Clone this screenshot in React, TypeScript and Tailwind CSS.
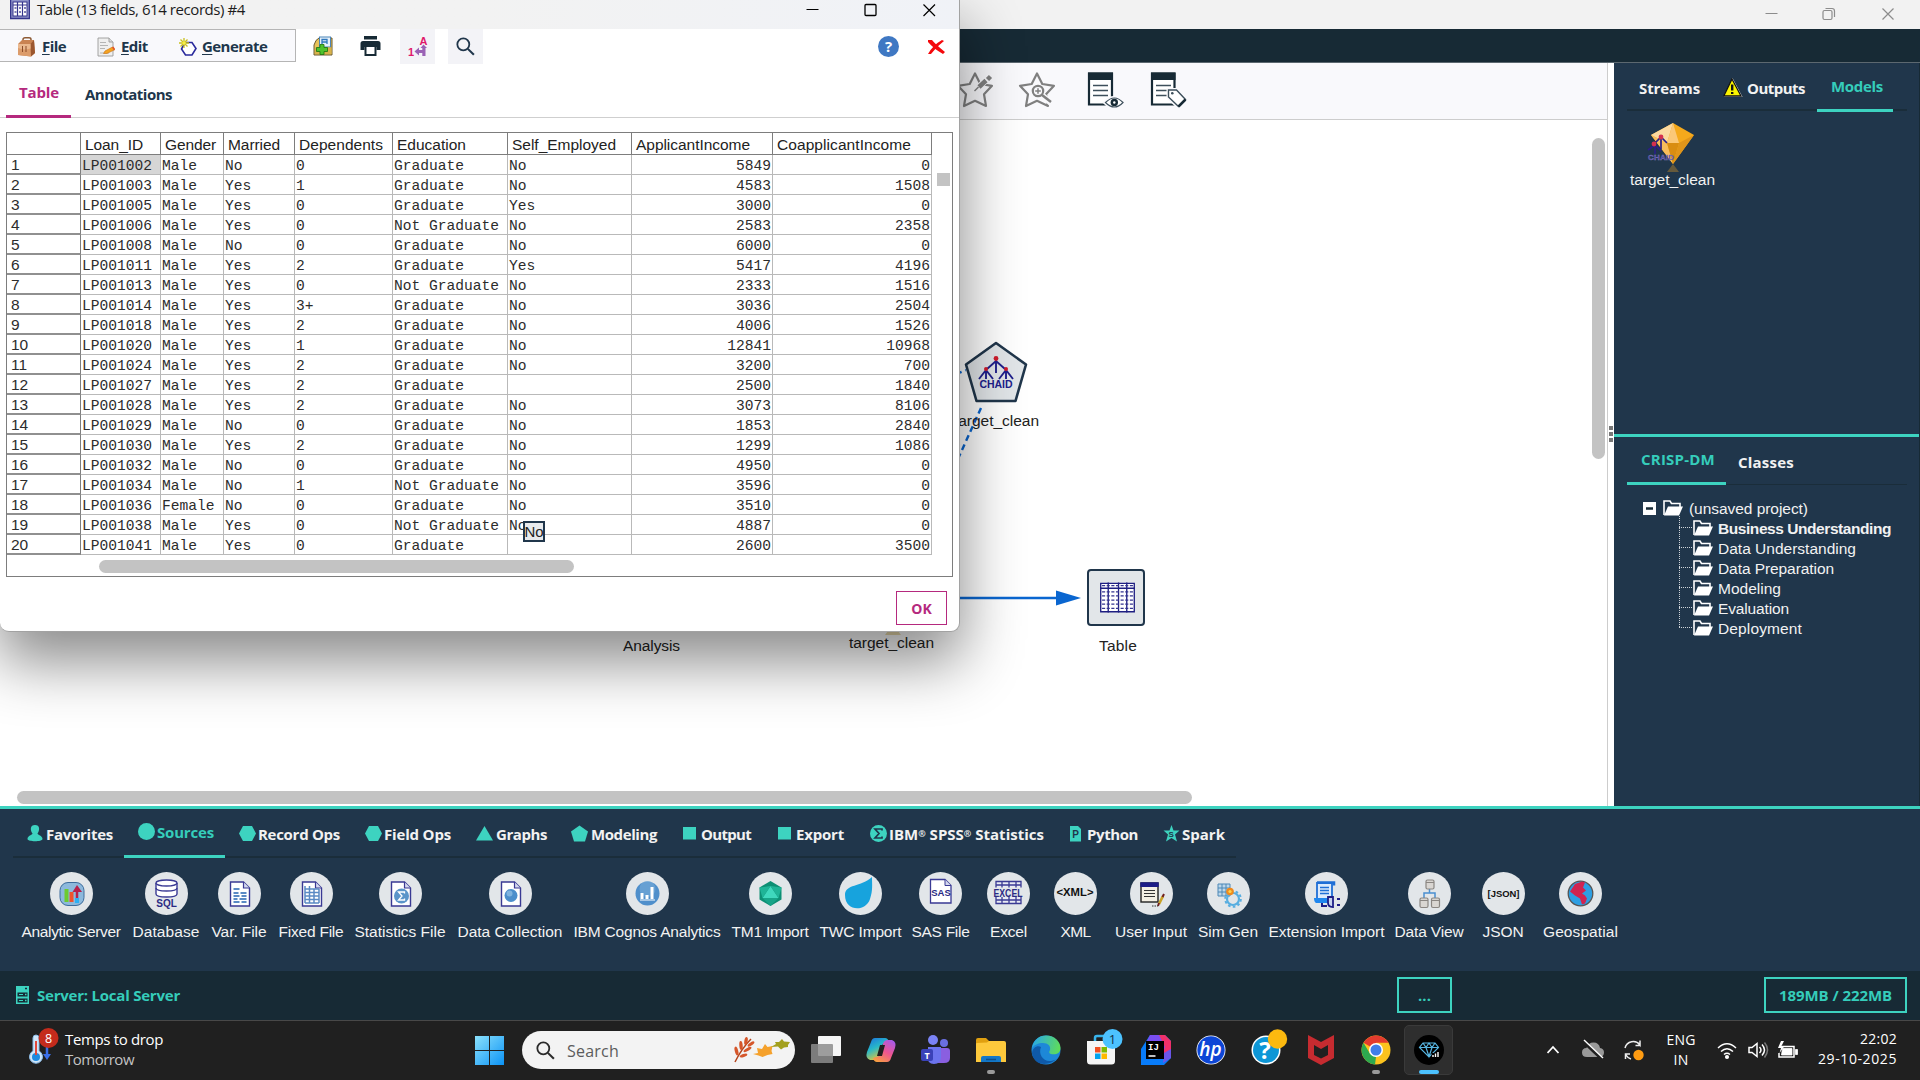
import React, { useLayoutEffect, useRef } from "react";
import type { ReactNode } from "react";

const UI = "font-['Open_Sans','Noto_Sans',sans-serif]";
const ARIAL = "font-['Liberation_Sans',Arial,sans-serif]";

/* One line of text whose tracking is adjusted so that it spans w pixels. */
function Fit({ w, className = "", children }: { w: number; className?: string; children: string }) {
  const ref = useRef<HTMLSpanElement>(null);
  useLayoutEffect(() => {
    const el = ref.current;
    if (!el) return;
    el.style.letterSpacing = "0px";
    const natural = el.getBoundingClientRect().width;
    el.style.letterSpacing = `${(w - natural) / children.length}px`;
  }, [w, children]);
  return (
    <span ref={ref} className={`inline-block whitespace-pre ${className}`}>
      {children.split(/(®)/).map((part, i) =>
        part === "®" ? (
          <span key={i} className="relative -top-[3px] text-[9px] leading-none">
            ®
          </span>
        ) : (
          part
        ),
      )}
    </span>
  );
}

/* ---------- Data ---------- */

const rows: string[][] = [
  ["LP001002", "Male", "No", "0", "Graduate", "No", "5849", "0"],
  ["LP001003", "Male", "Yes", "1", "Graduate", "No", "4583", "1508"],
  ["LP001005", "Male", "Yes", "0", "Graduate", "Yes", "3000", "0"],
  ["LP001006", "Male", "Yes", "0", "Not Graduate", "No", "2583", "2358"],
  ["LP001008", "Male", "No", "0", "Graduate", "No", "6000", "0"],
  ["LP001011", "Male", "Yes", "2", "Graduate", "Yes", "5417", "4196"],
  ["LP001013", "Male", "Yes", "0", "Not Graduate", "No", "2333", "1516"],
  ["LP001014", "Male", "Yes", "3+", "Graduate", "No", "3036", "2504"],
  ["LP001018", "Male", "Yes", "2", "Graduate", "No", "4006", "1526"],
  ["LP001020", "Male", "Yes", "1", "Graduate", "No", "12841", "10968"],
  ["LP001024", "Male", "Yes", "2", "Graduate", "No", "3200", "700"],
  ["LP001027", "Male", "Yes", "2", "Graduate", "", "2500", "1840"],
  ["LP001028", "Male", "Yes", "2", "Graduate", "No", "3073", "8106"],
  ["LP001029", "Male", "No", "0", "Graduate", "No", "1853", "2840"],
  ["LP001030", "Male", "Yes", "2", "Graduate", "No", "1299", "1086"],
  ["LP001032", "Male", "No", "0", "Graduate", "No", "4950", "0"],
  ["LP001034", "Male", "No", "1", "Not Graduate", "No", "3596", "0"],
  ["LP001036", "Female", "No", "0", "Graduate", "No", "3510", "0"],
  ["LP001038", "Male", "Yes", "0", "Not Graduate", "No", "4887", "0"],
  ["LP001041", "Male", "Yes", "0", "Graduate", "", "2600", "3500"],
];

const columns = [
  { name: "Loan_ID", cell: "w-[80px]", w: 58 },
  { name: "Gender", cell: "w-[63px]", w: 51 },
  { name: "Married", cell: "w-[71px]", w: 52 },
  { name: "Dependents", cell: "w-[98px]", w: 84 },
  { name: "Education", cell: "w-[115px]", w: 69 },
  { name: "Self_Employed", cell: "w-[124px]", w: 104 },
  { name: "ApplicantIncome", cell: "w-[141px]", w: 114 },
  { name: "CoapplicantIncome", cell: "w-[159px]", w: 134 },
];

/* ---------- Dialog icons ---------- */

const TableIcon = () => (
  <svg viewBox="0 0 20 20" className="h-5 w-5">
    <rect x="0.5" y="-2" width="19" height="20.500" fill="#8e93c8" stroke="#35358c" strokeWidth="1.500" />
    <rect x="3" y="2" width="14" height="14" fill="#fff" stroke="#35358c" />
    <path d="M3 5h14M7.500 2v14M12.500 2v14" stroke="#35358c" strokeWidth="1.200" />
    <path d="M4.500 8h2M9 8h2M14 8h2M4.500 12h2M9 12h2M14 12h2" stroke="#55559c" strokeWidth="1.300" />
  </svg>
);

const BriefcaseIcon = () => (
  <svg viewBox="0 0 19 20" className="h-5 w-[19px]">
    <path d="M6 5V2.500Q6 .8 8 .8h4Q14 .8 14 2.500V5" fill="none" stroke="#8d5a34" strokeWidth="1.5" />
    <path d="M1 7 5 3h12l1 13-4 3.500L1 18z" fill="#c98352" />
    <path d="M1 7h12.500L14 19.500 1 18z" fill="#dc9c6b" />
    <path d="M13.500 7 17 3l1 13-4 3.500z" fill="#9b5730" />
    <path d="M1 7h12.500v4.500Q7 13.500 1 11z" fill="#eab88e" />
    <path d="M5.500 9v6M9 9v6" stroke="#8b4d2a" strokeWidth="1" />
  </svg>
);

const EditDocIcon = () => (
  <svg viewBox="0 0 18 20" className="h-5 w-[18px]">
    <path d="M1 1h11l4 4v14H1z" fill="#efefef" stroke="#9a9a9a" strokeWidth=".9" />
    <path d="M12 1v4h4" fill="#ddd" stroke="#9a9a9a" strokeWidth=".9" />
    <path d="M3 5.500h6M3 8.500h8M3 11.500h5M3 16h9" stroke="#b4b4b4" />
    <path d="m6.500 16.500 1.500-2.500 7.500-4L18 12.500l-8 4z" fill="#f4a321" stroke="#c76f12" strokeWidth=".6" />
    <path d="m15 10.500 1.500-1L18 12l-1 1.500z" fill="#e4572e" />
  </svg>
);

const GenerateIcon = () => (
  <svg viewBox="0 0 18 20" className="h-5 w-[18px]">
    <path d="M6 5.500h7L17 11.500l-4 6.500H6.500L2.500 12z" fill="#fff" stroke="#2a2a9c" strokeWidth="1.600" />
    <path d="M5 1v10M0 6h10M1.500 2.500l7 7M8.500 2.500l-7 7" stroke="#c9c01d" strokeWidth="1.300" />
    <circle cx="5" cy="6" r="1.800" fill="#f6ee4a" />
  </svg>
);

const SaveAddIcon = () => (
  <svg viewBox="0 0 20 20" className="h-5 w-5">
    <path d="M1 9 3 4.500 6 2h13v17H1z" fill="#e8c35a" stroke="#6a5a30" />
    <rect x="6.500" y="1" width="11" height="10" fill="#e6f1fb" stroke="#4d86b8" />
    <path d="M9 8V3.500h5V8M9 6h5" stroke="#2f78bd" fill="none" strokeWidth="1.300" />
    <path d="M2 11.500h16.500V18H2z" fill="#d8b24a" />
    <path d="M7 8.500h4v3h3.500v4H11v3H7v-3H3.500v-4H7z" fill="#4fc22c" stroke="#257a12" strokeWidth=".9" />
  </svg>
);

const PrinterIcon = () => (
  <svg viewBox="0 0 21 20" className="h-5 w-[21px]">
    <path d="M4 0h13v3.500H4z" fill="#172a35" />
    <path d="M3 5h15q2.500 0 2.500 2.500V14h-4v-3h-12v3H.5V7.500Q.5 5 3 5z" fill="#172a35" />
    <path d="M5.500 11v8h10v-8" fill="#fff" stroke="#172a35" strokeWidth="2" />
  </svg>
);

const SortIcon = () => (
  <svg viewBox="0 0 20 21" className="h-[21px] w-5">
    <text x="11.500" y="8.500" fontSize="11" fontWeight="700" fill="#e0186b" fontFamily="Liberation Sans">A</text>
    <text x="0" y="20" fontSize="11" fontWeight="700" fill="#e0186b" fontFamily="Liberation Sans">1</text>
    <path d="m15.500 8.500-3 3.500h1.800v2H11v-2.500l-4.500 4 4.500 4v-2.500h3.300V20h3.200v-8h1.500z" fill="#9a62b5" />
  </svg>
);

const Magnifier = ({ className }: { className: string }) => (
  <svg viewBox="0 0 20 20" className={className} fill="none" stroke="currentColor">
    <circle cx="7.700" cy="7.700" r="6.300" strokeWidth="1.900" />
    <path d="m12.500 12.500 6.300 6.300" strokeWidth="2.200" />
  </svg>
);

function MenuItem({ icon, w, label, className }: { icon: ReactNode; w: string; label: string; className: string }) {
  return (
    <div className={`flex items-center ${className}`}>
      {icon}
      <span className={`${w} -mt-[1px] whitespace-nowrap text-[15px] leading-5 font-bold tracking-[-0.55px] text-[#20364b]`}>
        <span className="underline underline-offset-2">{label[0]}</span>
        {label.slice(1)}
      </span>
    </div>
  );
}

function DataGrid() {
  return (
    <div className="mt-[14px] ml-[6px] h-[445px] w-[947px] border border-[#7d7d7d] bg-white">
      <div className="flex">
        <div>
          <div className={`flex h-[22px] border-b border-[#7d7d7d] ${ARIAL} text-[15.5px] leading-[24px] text-[#222]`}>
            <div className="w-[74px] border-r border-[#7d7d7d]" />
            {columns.map((c) => (
              <div key={c.name} className={`${c.cell} shrink-0 border-r border-[#7d7d7d] pl-1`}>
                <Fit w={c.w}>{c.name}</Fit>
              </div>
            ))}
          </div>
          {rows.map((r, i) => (
            <div key={r[0]} className="flex h-5 text-[#2c2c2c]">
              <div
                className={`w-[74px] border-r border-b-2 border-r-[#7d7d7d] border-b-[#909090] pl-[4px] ${ARIAL} text-[15.5px] leading-[20px]`}
              >
                {i + 1}
              </div>
              {r.map((v, j) => (
                <div
                  key={j}
                  className={`${columns[j].cell} shrink-0 overflow-hidden border-r border-b border-[#b9b9b9] ${
                    j > 5 ? "pr-[1px] text-right" : "pl-[1px]"
                  } ${i === 0 && j === 0 ? "bg-[#d6d6d6]" : ""} font-['Liberation_Mono',monospace] text-[14.6px] leading-[23px] whitespace-pre`}
                >
                  {v}
                </div>
              ))}
            </div>
          ))}
        </div>
        <div className="ml-[5px] mt-[40px] h-[13px] w-[13px] bg-[#c3c3c3]" />
      </div>
      <div className="mt-[5px] ml-[92px] h-[13px] w-[475px] rounded-full bg-[#c3c3c3]" />
    </div>
  );
}

function Dialog() {
  return (
    <div className="absolute top-0 left-0 h-[632px] w-[960px] rounded-b-[9px] border-r border-b border-[#a2a2a2] bg-white shadow-[0_28px_60px_2px_rgba(0,0,0,0.46)]">
      <div className="flex h-[29px] items-start bg-gradient-to-r from-[#f2f2f2] via-[#f2f2f2] to-[#f0f2f7]">
        <div className="ml-[10px]">
          <TableIcon />
        </div>
        <Fit w={208} className="ml-[7px] text-[15px] leading-[19px] text-[#1c1c1c]">
          Table (13 fields, 614 records) #4
        </Fit>
        <svg viewBox="0 0 130 14" className="mt-[3px] ml-auto mr-[23px] h-[14px] w-[130px]" fill="none" stroke="#000">
          <path d="M.5 6.500h12" />
          <rect x="59" y="1.500" width="11" height="11" rx="1" strokeWidth="1.300" />
          <path d="m117.500 1.500 11.500 11.500M129 1.500 117.500 13" strokeWidth="1.200" />
        </svg>
      </div>
      <div className="flex h-[35px] items-start">
        <div className="flex h-[33px] w-[296px] items-center border-t border-r border-b border-[#b5b5b5] bg-[#f9f9fc] pt-[2px]">
          <MenuItem icon={<BriefcaseIcon />} label="File" w="ml-[6px]" className="ml-[17px] w-[80px]" />
          <MenuItem icon={<EditDocIcon />} label="Edit" w="ml-[6px]" className="w-[82px]" />
          <MenuItem icon={<GenerateIcon />} label="Generate" w="ml-[5px]" className="" />
        </div>
        <div className="ml-[17px] mt-[7px]">
          <SaveAddIcon />
        </div>
        <div className="ml-[27px] mt-[7px]">
          <PrinterIcon />
        </div>
        <div className="ml-[19px] flex h-[35px] w-[35px] items-center justify-center bg-[#f3f3f7]">
          <SortIcon />
        </div>
        <div className="ml-[13px] flex h-[35px] w-[35px] items-center justify-center bg-[#f3f3f7] text-[#20364b]">
          <Magnifier className="h-[19px] w-[19px]" />
        </div>
        <div className="ml-auto mt-[7px] flex h-[21px] w-[21px] items-center justify-center rounded-full bg-[#3f78c3] text-[15px] leading-none font-bold text-white">
          ?
        </div>
        <svg viewBox="0 0 18 16" className="mt-[10px] ml-[28px] mr-[14px] h-4 w-[18px]">
          <path d="M1 1h4q3 4 13 12l-2 2Q7 10 1 3z" fill="#f4090c" />
          <path d="M15 1l2 1Q9 8 4 15H1Q6 6 15 1z" fill="#f4090c" />
        </svg>
      </div>
      <div className="flex h-[54px] border-b border-[#cfcfcf] pl-[6px] text-[15px] font-bold">
        <div className="h-[54px] w-[65px] border-b-[3px] border-[#b5297e] pt-[17px] pl-[13px] leading-[22px] text-[#b5297e]">
          <Fit w={40}>Table</Fit>
        </div>
        <div className="pt-[19px] pl-[14px] leading-[22px] text-[#20364b]">
          <Fit w={87}>Annotations</Fit>
        </div>
      </div>
      <DataGrid />
      <div
        className={`absolute top-[521px] left-[523px] flex h-[21px] w-[22px] items-center justify-center border-2 border-[#20364b] bg-[#e8eaec] pt-[2px] ${ARIAL} text-[15px] text-[#222]`}
      >
        No
      </div>
      <div className="mt-[14px] ml-[896px] flex h-[34px] w-[51px] items-center justify-center border border-[#b5297e] bg-white text-[14px] font-bold text-[#b5297e]">
        OK
      </div>
    </div>
  );
}

/* ---------- Stream canvas ---------- */

const starPath = "M19 2.500 24.300 13 36 14.800 28 23.200 30 35 19 29.800 8 35 10 23.200 2 14.800 13.700 13z";

function StreamToolbar() {
  return (
    <div className="flex h-[57px] items-start border-b border-[#cdcdcd] bg-[#f9f9fc] pl-[956px] pt-2">
      <svg viewBox="0 0 38 38" className="h-[38px] w-[38px]" fill="none" stroke="#808080" strokeWidth="2.200" strokeLinejoin="round">
        <path d={starPath} />
        <path d="m31 8-9 9" strokeWidth="6.500" stroke="#f9f9fc" />
        <path d="m34.500 5.500-3 3M30 9.500l-7 6.500" strokeWidth="4.500" />
        <path d="m22.500 16-4 4" strokeWidth="1.500" />
      </svg>
      <svg viewBox="0 0 38 38" className="ml-[24px] h-[38px] w-[38px]" fill="none" stroke="#808080" strokeWidth="2.200" strokeLinejoin="round">
        <path d={starPath} />
        <path d="m25 25 9 8" stroke="#f9f9fc" strokeWidth="6" />
        <circle cx="20" cy="20" r="5.200" fill="#f9f9fc" />
        <path d="M17.200 20h5.600M20 17.200v5.600" strokeWidth="1.500" />
        <path d="m24 24 9 7" strokeWidth="2.500" />
      </svg>
      <svg viewBox="0 0 38 38" className="ml-[31px] h-[38px] w-[38px]">
        <path d="M2 2.500h23v31H2z" fill="#fff" stroke="#172a35" strokeWidth="2.200" />
        <path d="M1 1.500h25V9H1z" fill="#172a35" />
        <path d="M6 14.500h15M6 19.500h15M6 24.500h15" stroke="#3d4f5b" strokeWidth="1.500" />
        <path d="M17.500 31.500q9.500-10 19 0q-9.500 10-19 0z" fill="#fff" stroke="#f9f9fc" strokeWidth="3" />
        <path d="M18.500 31.500q9-9 17.500 0q-8.500 9-17.500 0z" fill="#fff" stroke="#3d4f5b" strokeWidth="1.200" />
        <circle cx="27.300" cy="31.500" r="3.700" fill="#172a35" />
        <circle cx="27.300" cy="31.500" r="1.200" fill="#fff" />
      </svg>
      <svg viewBox="0 0 38 38" className="ml-[25px] h-[38px] w-[38px]">
        <path d="M2 2.500h22.500v31H2z" fill="#fff" stroke="#172a35" strokeWidth="2.200" />
        <path d="M1 1.500h24.500V9H1z" fill="#172a35" />
        <path d="M6 14.500h15M6 19.500h13M6 24.500h12" stroke="#3d4f5b" strokeWidth="1.500" />
        <path d="M18.500 19h8l9.500 9.500-7.500 7.500-10-9.500z" fill="#fff" stroke="#f9f9fc" strokeWidth="4" />
        <path d="M18.500 19h8l9 9.500-7 7-10-9.500z" fill="#fff" stroke="#3d4f5b" strokeWidth="1.400" />
        <path d="m35.500 28.500-7 7" stroke="#172a35" strokeWidth="2.500" />
        <circle cx="22.300" cy="22.300" r="1.300" fill="#3d4f5b" />
      </svg>
    </div>
  );
}

function StreamCanvas() {
  return (
    <div className={`relative h-[686px] bg-white ${ARIAL} text-[15.5px] leading-[18px] text-[#222]`}>
      {/* Connections between the nodes */}
      <svg viewBox="0 0 260 300" className="absolute top-[240px] left-[900px] h-[300px] w-[260px]">
        <path d="m81 48-24 53M56 14l10-4" stroke="#0a66d0" strokeWidth="2.400" strokeDasharray="6 4" fill="none" />
        <path d="M40 238h118" stroke="#0a66d0" strokeWidth="2.500" />
        <path d="m156 230.500 25 7.500-25 7.500z" fill="#0a66d0" />
      </svg>
      <svg viewBox="0 0 64 62" className="absolute top-[221px] left-[964px] h-[62px] w-[64px]">
        <path d="M32 2 62 23.500 51.500 60h-39L2 23.500z" fill="#e2e6e9" stroke="#20364b" strokeWidth="2.600" strokeLinejoin="round" />
        <g stroke="#20208c" strokeWidth="1.900" fill="none">
          <path d="M32 19v13M22 29v9M42 29v9M15 38l7-9 7 9M35 38l7-9 7 9M23 28l9-8 9 8" />
        </g>
        <g fill="#d01c2c">
          <circle cx="32" cy="17.500" r="2.400" />
          <circle cx="22" cy="28" r="2" />
          <circle cx="42" cy="28" r="2" />
        </g>
        <text x="32" y="47" textAnchor="middle" fontSize="10.500" fontWeight="700" textLength="33" fill="#20208c" fontFamily="Liberation Sans">
          CHAID
        </text>
      </svg>
      <Fit w={85} className="absolute top-[292px] left-[954px]">target_clean</Fit>
      <div className="absolute top-[449px] left-[1087px] flex h-[57px] w-[58px] items-center justify-center rounded-[4px] border-2 border-[#20364b] bg-[#e2e6e9]">
        <svg viewBox="0 0 34 29" className="ml-[2px] h-[31px] w-[35px]">
          <path d="M.7.700h32.600v27.600H.7z" fill="#fff" stroke="#1f1f82" strokeWidth="1.300" />
          <path d="M0 5.500h34M8 0v29M18 0v29M26 0v29" stroke="#1f1f82" strokeWidth="1.300" />
          <path d="M2 3h30M2 9h30M2 13h30M2 17h30M2 21h30M2 25h30" stroke="#33338f" strokeWidth="1.200" strokeDasharray="3 1.500" />
        </svg>
      </div>
      <Fit w={38} className="absolute top-[517px] left-[1099px]">Table</Fit>
      <Fit w={57} className="absolute top-[517px] left-[623px]">Analysis</Fit>
      <svg viewBox="0 0 16 12" className="absolute top-[503px] left-[885px] h-3 w-4">
        <path d="m8 1 8 11H0z" fill="#eadcae" />
      </svg>
      <Fit w={85} className="absolute top-[514px] left-[849px]">target_clean</Fit>
      <div className="absolute top-[18px] left-[1592px] h-[321px] w-[13px] rounded-full bg-[#c3c3c3]" />
      <div className="absolute top-[671px] left-[17px] h-[13px] w-[1175px] rounded-full bg-[#c3c3c3]" />
    </div>
  );
}

/* ---------- Right side ---------- */

const FolderIcon = () => (
  <svg viewBox="0 0 20 16" className="h-4 w-5 shrink-0">
    <path d="M1 15V1h6l1.500 2.500H17V7" fill="none" stroke="#fff" strokeWidth="1.600" />
    <path d="M5 6.500h15L16 15.500H1z" fill="#fff" />
  </svg>
);

const phases = ["Data Understanding", "Data Preparation", "Modeling", "Evaluation", "Deployment"];
const phaseWidths = [138, 116, 63, 71, 84];

function SidePanel() {
  return (
    <div className="w-[306px] border-r border-[#172a35] bg-[#20364b] text-[15px] font-semibold text-[#f2f2f2]">
      <div className="h-[371px] pl-[13px]">
        <div className="flex h-[48px] w-[280px] border-b-2 border-[#1a2d3a] font-bold">
          <Fit w={61} className="ml-[12px] mt-[14px] leading-[22px]">Streams</Fit>
          <svg viewBox="0 0 20 20" className="ml-[23px] mt-[15px] h-5 w-5">
            <path d="M9.500 0 19.500 19H.3z" fill="#fff" />
            <path d="M9 1 18 18H.8z" fill="#fdf500" stroke="#111" strokeWidth="1.300" />
            <path d="M9.200 6.500v6M9.200 14v2" stroke="#111" strokeWidth="2.400" />
          </svg>
          <Fit w={58} className="ml-[4px] mt-[14px] leading-[22px]">Outputs</Fit>
          <div className="ml-[12px] h-[49px] w-[76px] border-b-[3px] border-[#3dd3c0] pt-[12px] pl-[14px] leading-[22px] text-[#35cdbb]">
            <Fit w={52}>Models</Fit>
          </div>
        </div>
        <div className={`mt-[10px] flex w-[94px] flex-col items-start ${ARIAL} text-[15.5px] font-normal`}>
          <svg viewBox="0 0 50 52" className="ml-[20px] h-[52px] w-[50px]">
            <path d="M4 14 26 2l21 12-21 29z" fill="#f5a91c" />
            <path d="M4 14 26 2l-6 20z" fill="#fbd9a0" />
            <path d="m26 2 6 20H20z" fill="#fbc878" />
            <path d="m4 14 16 8 6 21z" fill="#f8bd5c" />
            <path d="M20 22h12l-6 21z" fill="#d98d12" />
            <path d="m32 22 15-8-21 29z" fill="#e0951a" />
            <path d="m26 43 6 8H20z" fill="#665a3c" />
            <g stroke="#2b1f86" strokeWidth="1.700" fill="none">
              <path d="M14 16v12M8 25v8M1 29l7-5 6 6M8 22l6-6 6 6" />
            </g>
            <circle cx="14" cy="16" r="2.400" fill="#d5304f" />
            <circle cx="7" cy="23" r="2.400" fill="#d5304f" />
            <text x="1" y="39" fontSize="8" fontWeight="700" textLength="26" fill="#4a3f9e" stroke="#8f88c4" strokeWidth=".3" fontFamily="Liberation Sans">CHAID</text>
          </svg>
          <Fit w={85} className="-mt-[3px] ml-[3px] leading-[20px]">target_clean</Fit>
        </div>
      </div>
      <div className="border-t-[3px] border-[#3dd3c0] pl-[13px]">
        <div className="flex h-[48px] w-[280px] border-b border-[#1a2d3a] font-bold">
          <div className="h-[48px] w-[99px] border-b-[3px] border-[#3dd3c0] pt-[11px] pl-[14px] leading-[22px] text-[#35cdbb]">
            <Fit w={74}>CRISP-DM</Fit>
          </div>
          <Fit w={56} className="ml-[12px] mt-[14px] leading-[22px]">Classes</Fit>
        </div>
        <div className={`relative mt-[13px] ${ARIAL} text-[15.5px] font-normal`}>
          <div className="flex h-5 items-center">
            <svg viewBox="0 0 13 13" className="ml-4 h-[13px] w-[13px]">
              <path d="M0 0h13v13H0z" fill="#fff" />
              <path d="M3 6.500h7" stroke="#172a35" strokeWidth="2.500" />
            </svg>
            <span className="ml-[7px]"><FolderIcon /></span>
            <Fit w={119} className="mt-[2px] ml-[6px]">(unsaved project)</Fit>
          </div>
          <svg viewBox="0 0 16 114" className="absolute top-[18px] left-[52px] h-[114px] w-4" fill="none" stroke="#cfd5da" strokeDasharray="1 1">
            <path d="M.5 0v112M0 11.500h15M0 31.500h15M0 51.500h15M0 71.500h15M0 91.500h15M0 111.500h15" />
          </svg>
          <div className="flex h-5 items-center pl-[66px] font-bold">
            <FolderIcon />
            <Fit w={173} className="mt-[1px] ml-[5px]">Business Understanding</Fit>
          </div>
          {phases.map((p, i) => (
            <div key={p} className="flex h-5 items-center pl-[66px]">
              <FolderIcon />
              <Fit w={phaseWidths[i]} className="mt-[1px] ml-[5px]">{p}</Fit>
            </div>
          ))}
        </div>
      </div>
    </div>
  );
}

/* ---------- Palette ---------- */

const teal = "#3dd3c0";

const tabs: { label: string; cell: string; gap: string; w: number; active?: boolean; icon: ReactNode }[] = [
  {
    label: "Favorites", cell: "w-[111px] pl-[14px]", gap: "ml-[2px]", w: 67,
    icon: <path d="M8 0c5 0 5 5 2.500 8.500 0 1.500 5 2 5 5.500 0 3-15 3-15 0 0-3.500 5-4 5-5.500C3 5 3 0 8 0z" fill={teal} />,
  },
  { label: "Sources", cell: "w-[101px] pl-[14px]", gap: "ml-[2px]", w: 57, active: true, icon: <circle cx="8.500" cy="8.500" r="8.500" fill={teal} /> },
  { label: "Record Ops", cell: "w-[126px] pl-[14px]", gap: "ml-[2px]", w: 82, icon: <path d="M4 1h9l4 7.500L13 16H4L0 8.500z" fill={teal} /> },
  { label: "Field Ops", cell: "w-[112px] pl-[14px]", gap: "ml-[2px]", w: 67, icon: <path d="M4 1h9l4 7.500L13 16H4L0 8.500z" fill={teal} /> },
  { label: "Graphs", cell: "w-[95px] pl-[13px]", gap: "ml-[3px]", w: 51, icon: <path d="M8.500 1 17 15.500H0z" fill={teal} /> },
  { label: "Modeling", cell: "w-[110px] pl-[13px]", gap: "ml-[3px]", w: 66, icon: <path d="m8.500.5 8.500 6L14 16.500H3L0 6.500z" fill={teal} /> },
  { label: "Output", cell: "w-[97px] pl-[15px]", gap: "ml-[1px]", w: 50, icon: <path d="M0 2h13v12.500H0z" fill={teal} /> },
  { label: "Export", cell: "w-[93px] pl-[13px]", gap: "ml-[1px]", w: 48, icon: <path d="M0 2h13v12.500H0z" fill={teal} /> },
  {
    label: "IBM® SPSS® Statistics", cell: "w-[200px] pl-[12px]", gap: "ml-[2px]", w: 155,
    icon: (
      <>
        <circle cx="8.500" cy="8.500" r="8.500" fill={teal} />
        <path d="M12 5.500V4H5l4 4.500L5 13h7v-1.500" stroke="#20364b" strokeWidth="1.700" fill="none" />
      </>
    ),
  },
  {
    label: "Python", cell: "w-[95px] pl-[12px]", gap: "ml-0", w: 51,
    icon: (
      <>
        <path d="M0 1h8l3 3v12.500H0z" fill={teal} />
        <text x="2.200" y="13" fontSize="10" fontWeight="700" fill="#20364b" fontFamily="Liberation Sans">P</text>
      </>
    ),
  },
  {
    label: "Spark", cell: "w-[77px] pl-[10px]", gap: "ml-[2px]", w: 43,
    icon: (
      <>
        <path d="m8.500 0 2 5.500h6L12 9.500l2 7-5.500-3.500L3 16.500l2-7L.5 5.500h6z" fill={teal} />
        <text x="5.500" y="12" fontSize="8" fontWeight="700" fill="#20364b" fontFamily="Liberation Sans">S</text>
      </>
    ),
  },
];

const sheet = (
  <path d="M0 0h13l6 6v18H0z" fill="#fff" stroke="#3a3a94" strokeWidth="1.400" />
);
const fold = <path d="M13 0v6h6" fill="#d4d8ee" stroke="#3a3a94" strokeWidth="1.200" />;

const gears = (
  <g>
    <circle cx="26" cy="27" r="6" fill="none" stroke="#58aee0" strokeWidth="2.200" />
    <circle cx="26" cy="27" r="7.800" fill="none" stroke="#58aee0" strokeWidth="2" strokeDasharray="2.600 2.300" />
  </g>
);

const nodes: { label: string; cell: string; w: number; art: ReactNode }[] = [
  {
    label: "Analytic Server", cell: "w-[110px]", w: 99,
    art: (
      <g>
        <rect x="10" y="10.500" width="24" height="23" rx="8" fill="#8db9dc" stroke="#3c6c9c" />
        <path d="M16.500 17v13" stroke="#6ccb2f" strokeWidth="4" />
        <path d="M21.500 20v10" stroke="#f0522c" strokeWidth="4" />
        <path d="M27 26V18" stroke="#b81f4a" strokeWidth="2.500" />
        <path d="m22.500 20 4.500-7 5 7z" fill="#b81f4a" />
        <path d="M27 26v5" stroke="#2db0f2" strokeWidth="4" />
      </g>
    ),
  },
  {
    label: "Database", cell: "w-[80px]", w: 67,
    art: (
      <g>
        <path d="M11 11v11c0 4 21 4 21 0V11" fill="#fff" stroke="#3a3a94" strokeWidth="1.400" />
        <ellipse cx="21.500" cy="11" rx="10.500" ry="3" fill="#fff" stroke="#3a3a94" strokeWidth="1.400" />
        <path d="M11 16c0 4 21 4 21 0" fill="none" stroke="#3a3a94" strokeWidth="1.400" />
        <text x="21.500" y="35" textAnchor="middle" fontSize="10" fontWeight="700" fill="#2a2a84" fontFamily="Liberation Sans">SQL</text>
      </g>
    ),
  },
  {
    label: "Var. File", cell: "w-[66px]", w: 55,
    art: (
      <g transform="translate(12.500 10)">
        {sheet}{fold}
        <path d="M3 7h6M3 11h5M10 11h6M3 14h6M11 14h5M3 17h4M9 17h7M3 20h6M11 20h5" stroke="#5a8ac4" strokeWidth="1.900" />
      </g>
    ),
  },
  {
    label: "Fixed File", cell: "w-[78px]", w: 65,
    art: (
      <g transform="translate(12.500 10)">
        {sheet}{fold}
        <path d="M2.500 7h14M2.500 10.500h14M2.500 14h14M2.500 17.500h14M2.500 21h14M2.500 4v17M7 4v17M11.500 7v14M16.500 7v14" stroke="#5a8ac4" strokeWidth="1.500" />
      </g>
    ),
  },
  {
    label: "Statistics File", cell: "w-[100px]", w: 91,
    art: (
      <g transform="translate(12.500 10)">
        {sheet}{fold}
        <circle cx="10" cy="14" r="7.500" fill="#5b95c9" />
        <path d="M13 11.500V10H7l3.500 4L7 18h6v-1.500" fill="none" stroke="#fff" strokeWidth="1.300" />
      </g>
    ),
  },
  {
    label: "Data Collection", cell: "w-[120px]", w: 105,
    art: (
      <g transform="translate(12.500 10)">
        {sheet}{fold}
        <circle cx="9.500" cy="13.500" r="6.500" fill="#4c8fcb" />
        <circle cx="8" cy="11.500" r="3" fill="#7fb3de" />
      </g>
    ),
  },
  {
    label: "IBM Cognos Analytics", cell: "w-[154px]", w: 147,
    art: (
      <g>
        <circle cx="21.500" cy="21.500" r="12" fill="#4f8fcb" />
        <circle cx="21.500" cy="17" r="8" fill="#78acd9" opacity=".6" />
        <path d="M16 27v-6M21 27v-4M26 27V15" stroke="#fff" strokeWidth="3" />
        <path d="M14 28h15" stroke="#fff" />
      </g>
    ),
  },
  {
    label: "TM1 Import", cell: "w-[92px]", w: 77,
    art: (
      <g>
        <path d="m21.500 9 11 6.500v12L21.500 34l-11-6.500v-12z" fill="#0d8f74" />
        <path d="m21.500 14 8 12h-16z" fill="#3fd8bd" />
        <path d="m10.500 15.500 11-1.500-8 12zM32.500 15.500l-11-1.500 8 12z" fill="#1fb497" />
        <path d="M13.500 26h16l-8 8z" fill="#17a488" />
      </g>
    ),
  },
  {
    label: "TWC Import", cell: "w-[89px]", w: 82,
    art: <path d="M33 5c0 8 1 13-2 22-4 13-25 13-25-4C6 12 22 15 33 5z" fill="#17a3dd" />,
  },
  {
    label: "SAS File", cell: "w-[71px]", w: 58,
    art: (
      <g>
        <path d="M11.500 7.500H26l6 6V31H11.500z" fill="#fff" stroke="#3a3a94" strokeWidth="1.300" />
        <path d="M26 7.500v6h6" fill="#d4d8ee" stroke="#3a3a94" />
        <text x="22" y="24" textAnchor="middle" fontSize="9.500" fontWeight="700" fill="#2a2a84" fontFamily="Liberation Sans">SAS</text>
      </g>
    ),
  },
  {
    label: "Excel", cell: "w-[65px]", w: 37,
    art: (
      <g>
        <path d="M9 9.500h25v22H9zM9 13h25M9 28h25M15 9v22M22 9v22M29 9v22" fill="#e9ebf4" stroke="#3a3a94" strokeWidth="1.300" />
        <path d="M6 15.500h30v9.500H6z" fill="#e2e6e9" />
        <text x="21" y="24.500" textAnchor="middle" fontSize="11" fontWeight="700" textLength="29" lengthAdjust="spacingAndGlyphs" fill="#2a2a84" fontFamily="Liberation Sans">EXCEL</text>
      </g>
    ),
  },
  {
    label: "XML", cell: "w-[69px]", w: 30,
    art: <text x="21" y="24" textAnchor="middle" fontSize="11.500" fontWeight="700" textLength="37" lengthAdjust="spacingAndGlyphs" fill="#111" fontFamily="Liberation Sans">&lt;XML&gt;</text>,
  },
  {
    label: "User Input", cell: "w-[82px]", w: 72,
    art: (
      <g>
        <rect x="11" y="11" width="17" height="19" fill="#f3efe4" stroke="#222" strokeWidth="1.400" />
        <path d="M10.300 10.300h18.400V15H10.300z" fill="#1d1d86" />
        <path d="M14 18.500h11M14 21.500h11M14 24.500h11" stroke="#333" strokeWidth="1.200" />
        <path d="m33 24-4 8" stroke="#c9a227" strokeWidth="2.600" />
        <path d="m34 22-1.500 3M29 31l-1 3" stroke="#702020" strokeWidth="2" />
        <path d="M22 34h6" stroke="#333" strokeDasharray="1.500 1" />
      </g>
    ),
  },
  {
    label: "Sim Gen", cell: "w-[72px]", w: 60,
    art: (
      <g>
        <path d="M11 12h12v12H11z" fill="#bcd7ea" stroke="#4c88b6" />
        <path d="M11 16h12M11 20h12M15 12v12M19 12v12" stroke="#4c88b6" />
        {gears}
        <circle cx="23" cy="19.500" r="3.800" fill="#f08a1c" />
        <circle cx="23" cy="19.500" r="1.600" fill="#ffd34a" />
      </g>
    ),
  },
  {
    label: "Extension Import", cell: "w-[125px]", w: 116,
    art: (
      <g>
        <path d="M12 11h15v17H12z" fill="#dbeafc" stroke="#1f6fd6" strokeWidth="1.800" />
        <path d="M12 10.500h17v3" stroke="#1f6fd6" strokeWidth="2.500" fill="none" />
        <path d="M15 15.500h9M15 18.500h9M15 21.500h9" stroke="#1f6fd6" strokeWidth="1.300" />
        <path d="M9 26h15v5H11q-2-1-2-5z" fill="#1f86ee" />
        <path d="M23 25h5v10q-5 0-5-4z" fill="#c8d4ee" stroke="#1d1d86" strokeWidth="1.800" />
        <path d="M17 31v3h5M32 27h3M32 33h3" stroke="#1d1d86" strokeWidth="2" fill="none" />
      </g>
    ),
  },
  {
    label: "Data View", cell: "w-[80px]", w: 69,
    art: (
      <g fill="#d9d6d2" stroke="#8a8682" strokeWidth="1.200">
        <path d="M21.500 17v4M16 26v-5h11v5" fill="none" stroke="#4a8fd0" strokeWidth="1.500" />
        <rect x="18" y="8" width="8" height="9" rx="1.500" />
        <rect x="12" y="26" width="8" height="9.500" rx="1.500" />
        <rect x="23.500" y="26" width="8" height="9.500" rx="1.500" />
        <path d="M18 10.500h8M12 28.500h8M23.500 28.500h8" />
      </g>
    ),
  },
  {
    label: "JSON", cell: "w-[68px]", w: 41,
    art: <text x="21.500" y="25" textAnchor="middle" fontSize="9.500" fontWeight="700" textLength="32" lengthAdjust="spacingAndGlyphs" fill="#111" fontFamily="Liberation Sans">[JSON]</text>,
  },
  {
    label: "Geospatial", cell: "w-[87px]", w: 75,
    art: (
      <g>
        <circle cx="21.500" cy="21.500" r="12.300" fill="#2d9fe3" stroke="#555" strokeWidth="1.300" />
        <path d="m16 12 7-2.500 3 1-2 5 3 3-4 3 3 2 2 3-2 5-3 1-2-6-5-3-5-4z" fill="#d02450" />
      </g>
    ),
  },
];

function Palette() {
  return (
    <div className="h-[165px] border-t-[3px] border-[#3dd3c0] bg-[#20364b]">
      <div className="ml-[13px] flex h-[49px] w-[1223px] border-b-2 border-[#1a2d3a] text-[15px] leading-[20px] font-bold">
        {tabs.map((t) => (
          <div
            key={t.label}
            className={`flex h-[49px] shrink-0 items-start ${t.cell} ${
              t.active ? "border-b-[3px] border-[#3dd3c0] pt-[14px] text-[#35cdbb]" : "pt-[16px] text-[#f2f2f2]"
            }`}
          >
            <svg viewBox="0 0 17 17" className="h-[17px] w-[17px] shrink-0">{t.icon}</svg>
            <Fit w={t.w} className={`-mt-px ${t.gap}`}>{t.label}</Fit>
          </div>
        ))}
      </div>
      <div className={`flex pl-4 pt-[14px] ${ARIAL} text-[15.5px] text-[#f2f2f2]`}>
        {nodes.map((n) => (
          <div key={n.label} className={`${n.cell} flex shrink-0 flex-col items-center`}>
            <svg viewBox="0 0 43 43" className="h-[43px] w-[43px]">
              <circle cx="21.500" cy="21.500" r="21.500" fill="#e2e6e9" />
              {n.art}
            </svg>
            <Fit w={n.w} className="mt-[7px] leading-[20px]">{n.label}</Fit>
          </div>
        ))}
      </div>
    </div>
  );
}

function StatusBar() {
  return (
    <div className="flex h-[48px] items-center bg-[#172a35] text-[15px] font-bold text-[#35cdbb]">
      <svg viewBox="0 0 13 18" className="ml-4 h-[18px] w-[13px]">
        <path d="M0 0h13v18H0z" fill="#3dd3c0" />
        <path d="M1.500 6.500h10v4h-10zM1.500 12.500h10v4h-10z" fill="#172a35" />
        <path d="M3 8.500h4M3 14.500h4" stroke="#3dd3c0" />
        <path d="M9 2.500h2" stroke="#172a35" strokeWidth="1.500" />
        <path d="M9 8.500h1.500M9 14.500h1.500" stroke="#3dd3c0" strokeWidth="1.500" />
      </svg>
      <Fit w={143} className="ml-2">Server: Local Server</Fit>
      <div className="ml-auto flex h-9 w-[55px] items-center justify-center border-2 border-[#3dd3c0]">...</div>
      <div className="mr-[13px] ml-[312px] flex h-9 w-[143px] items-center justify-center border-2 border-[#3dd3c0]">
        <Fit w={113}>189MB / 222MB</Fit>
      </div>
    </div>
  );
}

/* ---------- Taskbar ---------- */

const apps: { id: string; art: ReactNode; dot?: boolean }[] = [
  {
    id: "task-view",
    art: (
      <g>
        <rect x="7" y="1" width="23" height="20" rx="1" fill="#f5f5f5" />
        <rect x="0" y="9" width="22" height="19" rx="1" fill="#8d8d8d" fillOpacity=".85" />
      </g>
    ),
  },
  {
    id: "copilot",
    art: (
      <g>
        <path d="M9 3h10q3 0 4 4l-3 1q-4 0-5 5l-2 8q-1 4-5 4H4q-5-2-3-8L5 7q1-4 4-4z" fill="url(#cp1)" />
        <path d="M21 27H11q-3 0-4-4l3-1q4 0 5-5l2-8q1-4 5-4h4q5 2 3 8l-4 10q-1 4-4 4z" fill="url(#cp2)" />
        <path d="m14 10-3 11h5l3-11z" fill="#202020" />
      </g>
    ),
  },
  {
    id: "teams",
    art: (
      <g>
        <circle cx="12" cy="5" r="5" fill="#7b83f5" />
        <circle cx="23" cy="8" r="4" fill="#6a6fe0" />
        <path d="M17 13h9q3 0 3 3v7q0 5-6 5h-6z" fill="#8a5fe0" />
        <path d="M7 12h13v10q0 7-7 7t-6-7z" fill="#6c74ee" />
        <rect x="0" y="14" width="12" height="12" rx="2" fill="#3a42b8" />
        <text x="6" y="23.500" textAnchor="middle" fontSize="9" fontWeight="700" fill="#fff" fontFamily="Open Sans">T</text>
      </g>
    ),
  },
  {
    id: "explorer", dot: true,
    art: (
      <g>
        <path d="M0 5q0-2 2-2h8l3 3v5H0z" fill="#e0a010" />
        <path d="M0 9q0-1 1-1l10-.5L13 6h15q2 0 2 2v19H0z" fill="#fdc93c" />
        <path d="M5 27v-4q0-2 2-2h16q2 0 2 2v4z" fill="#1378c8" />
        <path d="M10 24.500h10" stroke="#0b4f8c" strokeWidth="1.500" />
      </g>
    ),
  },
  {
    id: "edge",
    art: (
      <g>
        <circle cx="15" cy="15" r="14.500" fill="#1d88d8" />
        <path d="M1 13C3 3 10 .5 15 .5c9 0 14.500 6.500 14.500 12.500S24 20 20 19q-3-1-1-4c1-4-2-7-7-7S3 10 1 13z" fill="url(#eg)" />
        <path d="M10 12c-3 7 2 15 10 14 3-.5 5-1.500 6-2.500C19 31 4 32 1 19c0-7 6-9 9-7z" fill="#0f59a8" />
      </g>
    ),
  },
  {
    id: "store",
    art: (
      <g>
        <path d="M9 7V3q0-2 2-2h8q2 0 2 2v4" fill="none" stroke="#38b4ec" strokeWidth="2.500" />
        <path d="M1 6h28v20q0 3.500-3.500 3.500h-21Q1 29.500 1 26z" fill="#f5f5f5" />
        <path d="M9 12h5.500v5.500H9z" fill="#f25022" /><path d="M15.500 12H21v5.500h-5.500z" fill="#7fba00" />
        <path d="M9 18.500h5.500V24H9z" fill="#00a4ef" /><path d="M15.500 18.500H21V24h-5.500z" fill="#ffb900" />
        <circle cx="26.500" cy="4" r="10" fill="#4cc2ff" />
        <text x="26.500" y="9" textAnchor="middle" fontSize="13" fill="#12324a" fontFamily="Open Sans">1</text>
      </g>
    ),
  },
  {
    id: "intellij",
    art: (
      <g>
        <path d="M9 0h15l6 6v17l-7 7H0V14z" fill="#087cfa" />
        <path d="M16 0h8l6 6v12l-8 2z" fill="#f0306a" />
        <path d="M9 0h9l6 12-4 12H5V8z" fill="#7a4ef0" />
        <path d="m22 28 8-5V14l-7 4z" fill="#6b55e8" />
        <rect x="5" y="6" width="18" height="18" fill="#000" />
        <text x="7" y="15" fontSize="9" fontWeight="700" fill="#fff" fontFamily="Liberation Mono">IJ</text>
        <path d="M7.500 21h7" stroke="#fff" strokeWidth="1.500" />
      </g>
    ),
  },
  {
    id: "hp",
    art: (
      <g>
        <circle cx="15" cy="15" r="14.500" fill="#fff" />
        <circle cx="15" cy="15" r="13.700" fill="#0d46d6" />
        <text x="14.500" y="20.500" textAnchor="middle" fontSize="19" fontStyle="italic" fontWeight="600" fill="#fff" fontFamily="Open Sans">hp</text>
      </g>
    ),
  },
  {
    id: "support",
    art: (
      <g>
        <circle cx="15" cy="15" r="14.500" fill="#fff" />
        <circle cx="15" cy="15" r="13" fill="#0d96d6" />
        <text x="14" y="24" textAnchor="middle" fontSize="24" fontWeight="700" fill="#fff" fontFamily="Open Sans">?</text>
        <circle cx="26.500" cy="4" r="9.700" fill="#fcb90f" />
      </g>
    ),
  },
  {
    id: "mcafee",
    art: <path d="m2 0 13 7 13-7v23l-13 7-13-7zm6 10v10l7 3.500 7-3.500V10l-7 4z" fill="#c62b30" fillRule="evenodd" />,
  },
  {
    id: "chrome", dot: true,
    art: (
      <g>
        <circle cx="15" cy="15" r="14.500" fill="#fcc31e" />
        <path d="M15 15 2.500 7.700A14.500 14.500 0 0 1 27.600 7.800H15z" fill="#e33b2e" />
        <path d="M2.500 7.700 9 18.800 15 22l-1 7.500A14.500 14.500 0 0 1 2.500 7.700z" fill="#2da94f" />
        <circle cx="15" cy="15" r="7" fill="#fff" />
        <circle cx="15" cy="15" r="5.500" fill="#3f7ee8" />
      </g>
    ),
  },
];

function Taskbar() {
  return (
    <div className="flex h-[61px] border-t border-[#172a35] bg-[#202020] text-white shadow-[inset_0_1px_0_#484848]">
      <svg viewBox="0 0 36 40" className="mt-[7px] ml-[26px] h-10 w-9">
        <path d="M7 11q0-3 3-3t3 3v13a6.500 6.500 0 1 1-6 0z" fill="#cfe6fa" stroke="#8cbce8" />
        <circle cx="10" cy="30" r="4" fill="#1e8ae0" />
        <path d="M10 14v14" stroke="#e0483c" strokeWidth="2" />
        <path d="M21 20v8" stroke="#3a6fe8" strokeWidth="2.500" />
        <path d="m17 27 4 6 4-6z" fill="#3a6fe8" />
        <circle cx="22.500" cy="11" r="10" fill="#c42b1c" />
        <text x="22.500" y="15.500" textAnchor="middle" fontSize="12.500" fill="#fff" fontFamily="Open Sans">8</text>
      </svg>
      <div className="mt-[9px] ml-[3px] flex w-[410px] flex-col items-start text-[15px] leading-5">
        <Fit w={98}>Temps to drop</Fit>
        <Fit w={69} className="text-[#c4c4c4]">Tomorrow</Fit>
      </div>
      <svg viewBox="0 0 29 29" className="mt-4 h-[29px] w-[29px]">
        <defs>
          <linearGradient id="win" x1="0" y1="0" x2="1" y2="1"><stop stopColor="#8be1fc" /><stop offset="1" stopColor="#0c93f5" /></linearGradient>
          <linearGradient id="cp1" x1="0" y1="0" x2=".5" y2="1"><stop stopColor="#1c6fe0" /><stop offset=".5" stopColor="#27b8c8" /><stop offset="1" stopColor="#e8c838" /></linearGradient>
          <linearGradient id="cp2" x1=".8" y1="0" x2=".2" y2="1"><stop stopColor="#a85ae8" /><stop offset=".5" stopColor="#ee5590" /><stop offset="1" stopColor="#f8a040" /></linearGradient>
          <linearGradient id="eg" x1="0" y1=".3" x2="1" y2=".5"><stop stopColor="#28a8e8" /><stop offset="1" stopColor="#5fdc5a" /></linearGradient>
        </defs>
        <path d="M0 0h14v14H0zM15 0h14v14H15zM0 15h14v14H0zM15 15h14v14H15z" fill="url(#win)" />
      </svg>
      <div className="mt-[11px] ml-[18px] flex h-[38px] w-[273px] items-center rounded-full bg-[#f3f3f3] pl-[14px] text-[#2b2b2b]">
        <Magnifier className="h-[19px] w-[19px]" />
        <Fit w={52} className="mt-px ml-[12px] text-[16px] text-[#5c5c5c]">Search</Fit>
        <svg viewBox="0 0 58 28" className="ml-auto mr-[4px] h-7 w-[58px]">
          <path d="M2 26Q9 12 18 3" stroke="#b4441c" strokeWidth="1.500" fill="none" />
          <g fill="#d5562a">
            <ellipse cx="13" cy="5" rx="1.700" ry="4" transform="rotate(10 13 5)" />
            <ellipse cx="18" cy="8" rx="4" ry="1.500" transform="rotate(-35 18 8)" />
            <ellipse cx="8" cy="9.500" rx="1.700" ry="4.500" transform="rotate(-5 8 9.500)" />
            <ellipse cx="14.500" cy="13.500" rx="4.500" ry="1.500" transform="rotate(-30 14.500 13.500)" />
            <ellipse cx="3.500" cy="15" rx="1.700" ry="4.500" transform="rotate(-15 3.500 15)" />
            <ellipse cx="10.500" cy="19.500" rx="4" ry="1.500" transform="rotate(-20 10.500 19.500)" />
          </g>
          <path d="m20 18 5-1-1-5 5 1 3-5 2.500 3 5-1-1 5 1 3-5 1-5 2-4-1.500z" fill="#f5a12c" />
          <path d="m38 11 5-3-1-2 4 0 3-3 2 2.500 6 .5-2 3 0 2-4 .5-3 2-3-3z" fill="#a3a01e" />
        </svg>
      </div>
      <div className="ml-[3px] flex">
        {apps.map((a) => (
          <div key={a.id} className="flex w-[55px] flex-col items-center">
            <svg viewBox="0 0 30 30" className="mt-[15px] h-[30px] w-[30px] overflow-visible">{a.art}</svg>
            {a.dot && <div className="mt-[5px] h-1 w-2 rounded-full bg-[#9a9a9a]" />}
          </div>
        ))}
        <div className="mt-[5px] ml-px flex h-[50px] w-[49px] flex-col items-center rounded-[5px] border border-[#3a3a3a] bg-[#2e2e2e]">
          <svg viewBox="0 0 30 30" className="mt-[9px] ml-px h-[30px] w-[30px]">
            <circle cx="15" cy="15" r="15" fill="#000" />
            <path d="M9 8h12l3.500 4.500L15 22 5.500 12.500zM5.500 12.500h19M9 8l3 4.500 3 9 3-9L21 8M12 12.500 15 8l3 4.500" fill="none" stroke="#56b4e0" strokeWidth="1.200" />
            <path d="M17.500 18h8v5h-8z" fill="#000" />
            <path d="M19 22v-2M21.500 22v-3.500M24 22v-5" stroke="#fff" strokeWidth="1.400" />
          </svg>
          <div className="mt-[5px] h-1 w-5 rounded-full bg-[#4cc2ff]" />
        </div>
      </div>
      <svg viewBox="0 0 100 24" className="mt-[18px] ml-auto h-6 w-[100px]">
        <path d="m.5 15 5.500-6 5.500 6" stroke="#fff" strokeWidth="1.800" fill="none" />
        <path d="M40 19q-5 0-5-4.500T39.500 10Q41 4.500 46.500 4.500T53 10q4 .5 4 4.500T52.500 19z" fill="#9a9a9a" />
        <path d="m36 3 19 18" stroke="#202020" strokeWidth="3.500" />
        <path d="m37 2 19 18" stroke="#fff" strokeWidth="1.400" />
        <path d="M78 10a8.500 8.500 0 0 1 15-3V2.500M93 7.500h-4.500M78.500 21v-5H83M79 17a8.500 8.500 0 0 0 5 4" stroke="#eee" strokeWidth="1.500" fill="none" />
        <circle cx="91.500" cy="17" r="5.200" fill="#ff9c12" />
      </svg>
      <div className="mt-[10px] ml-[16px] flex w-[36px] flex-col items-center text-[14px] leading-5">
        <Fit w={29}>ENG</Fit>
        <Fit w={15}>IN</Fit>
      </div>
      <svg viewBox="0 0 84 24" className="mt-[18px] ml-[17px] h-6 w-[84px]" fill="none" stroke="#fff" strokeWidth="1.500">
        <path d="M2 10q9-8.500 18 0M5 13.500q6-5.500 12 0M8 16.500q3-2.500 6 0" />
        <circle cx="11" cy="19" r="1.300" fill="#fff" />
        <path d="M33 9.500h3l5-4v13l-5-4h-3z" />
        <path d="M43.500 9q3 3 0 6M46 6.500q5 5.500 0 11" />
        <path d="M48.500 4.500q6 7 0 15" stroke="#777" />
        <path d="M66 8.500h12v10.500H63V15" />
        <path d="M66.500 10.500H76v6.500H65.500zM79.500 11.500h2v5h-2z" fill="#fff" strokeWidth=".8" />
        <path d="m65 3-3 7h3l-1.500 5 5-7h-3L68 3z" fill="#fff" stroke="none" />
      </svg>
      <div className="mr-[23px] ml-[16px] mt-[9px] flex w-[81px] flex-col items-end text-[14px] leading-5">
        <Fit w={37}>22:02</Fit>
        <Fit w={79}>29-10-2025</Fit>
      </div>
    </div>
  );
}

export default function App() {
  return (
    <div className={`relative flex h-[1080px] w-[1920px] flex-col overflow-hidden bg-white ${UI}`}>
      <div className="flex h-[29px] justify-end bg-[#f2f2f2]">
        <svg viewBox="0 0 132 14" className="mt-[7px] mr-[26px] h-[14px] w-[132px]" fill="none" stroke="#8c8c8c">
          <path d="M3.500 6.500h12" />
          <rect x="61" y="3.500" width="9" height="9" rx="1.500" strokeWidth="1.200" />
          <path d="M63.500 1.500H70q2.500 0 2.500 2.500v6" strokeWidth="1.200" />
          <path d="m120.500 1.500 11 11M131.500 1.500l-11 11" strokeWidth="1.200" />
        </svg>
      </div>
      <div className="h-[34px] border-b border-[#5c6870] bg-[#172a35]" />
      <div className="flex h-[743px]">
        <div className="w-[1608px] border-r border-[#cdcdcd]">
          <StreamToolbar />
          <StreamCanvas />
        </div>
        <div className="flex w-[6px] flex-col items-center gap-[2px] bg-white pt-[363px]">
          <div className="h-1 w-1 bg-[#777]" />
          <div className="h-1 w-1 bg-[#777]" />
          <div className="h-1 w-1 bg-[#777]" />
        </div>
        <SidePanel />
      </div>
      <Palette />
      <StatusBar />
      <Taskbar />
      <Dialog />
    </div>
  );
}
